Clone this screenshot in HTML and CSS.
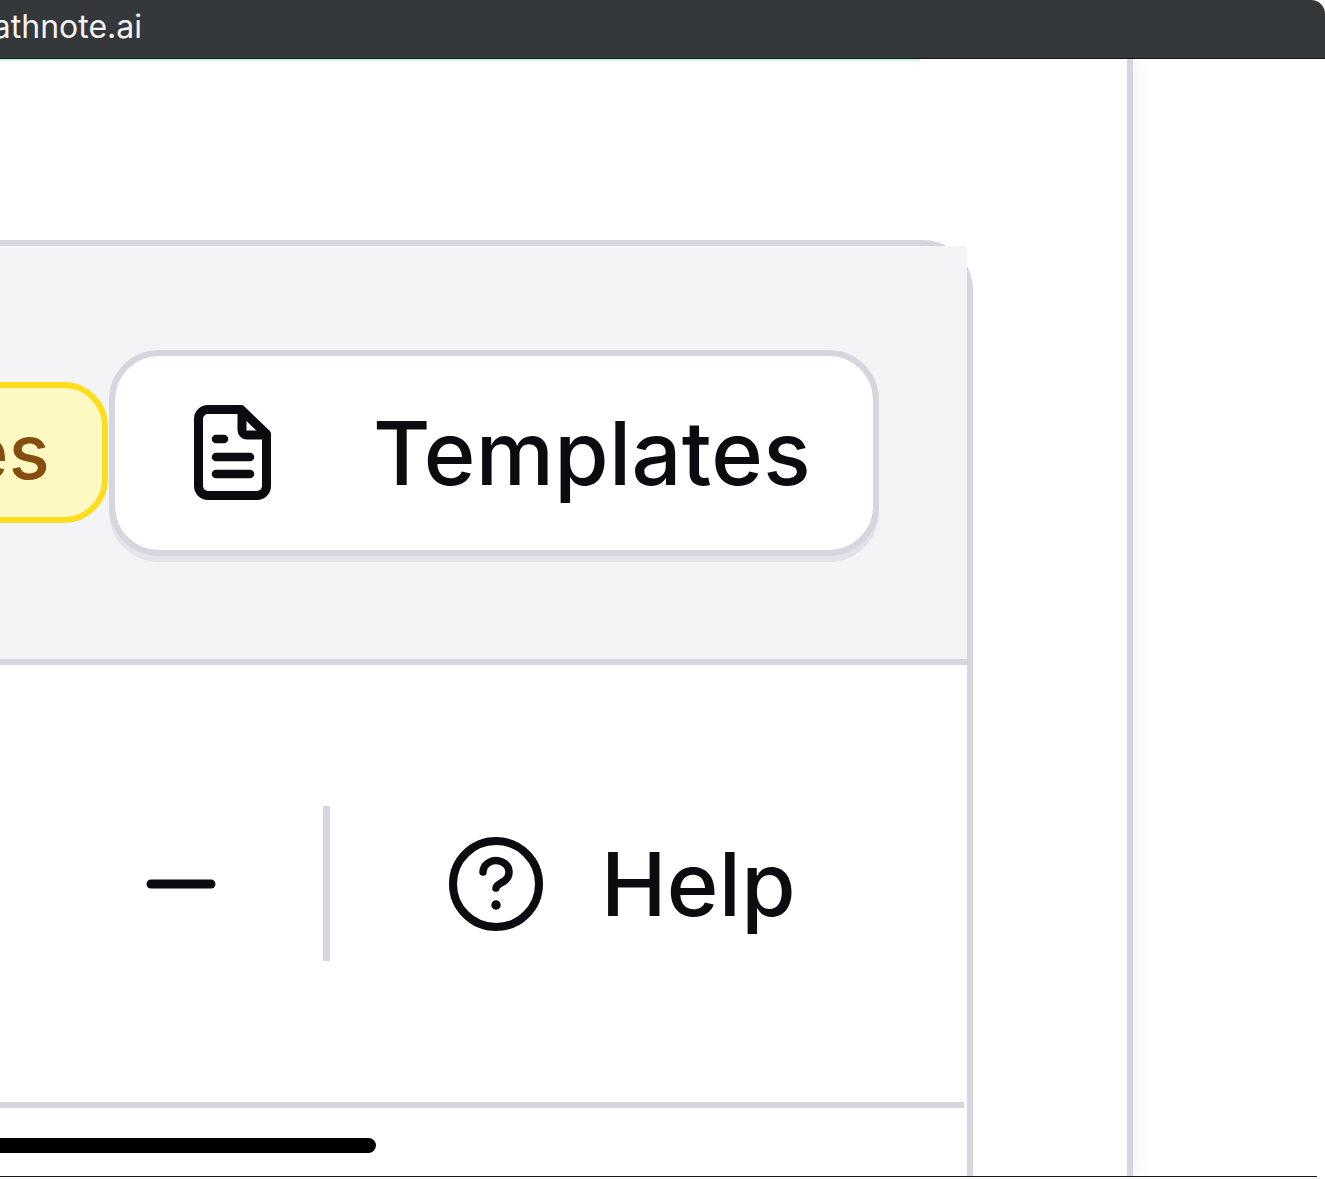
FILE: index.html
```html
<!DOCTYPE html>
<html lang="en">
  <head>
    <meta charset="UTF-8" />
    <meta name="viewport" content="width=device-width, initial-scale=1.0" />
    <title>Templates</title>
    <link rel="stylesheet" href="styles.css">
  </head>
  <body>
    <header class="url-bar">
      <div class="url-text"><span>mathnote.ai</span></div>
    </header>
    <div class="progress"></div>

    <main class="viewport">
      <div class="column">
        <section class="card">
          <div class="card-head">
            <button class="pill">es</button>
            <button class="btn-templates">
              <svg class="icon-doc" width="78" height="95" viewBox="0 0 78 95" fill="none" stroke="#0b0b10" stroke-width="9" stroke-linecap="round" stroke-linejoin="round">
                <path d="M14 4.500H47L72.500 29V81a9.500 9.500 0 0 1-9.500 9.500H14A9.500 9.500 0 0 1 4.500 81V14A9.500 9.500 0 0 1 14 4.500Z" />
                <path d="M48 6V25a5 5 0 0 0 5 5H71" />
                <path d="M22 34h8M22 52h34M22 69h34" stroke-width="8.500" />
              </svg>
              <span>Templates</span>
            </button>
          </div>

          <div class="tool-row">
            <svg class="icon-minus" width="70" height="10" viewBox="0 0 70 10">
              <path d="M5 5H65" stroke="#0b0b10" stroke-width="9" stroke-linecap="round" />
            </svg>
            <div class="divider"></div>
            <div class="help">
              <svg width="96" height="96" viewBox="0 0 96 96" fill="none" stroke="#0b0b10" stroke-width="8" stroke-linecap="round" stroke-linejoin="round">
                <circle cx="48" cy="48" r="43" />
                <path d="M35 36a13 11.500 0 1 1 20.500 9.500c-3.500 2.200-7 3.500-7.500 6.500" stroke-width="7.500" />
                <circle cx="48" cy="69" r="4.700" fill="#0b0b10" stroke="none" />
              </svg>
              <span>Help</span>
            </div>
          </div>

          <div class="black-bar"></div>
        </section>
      </div>
    </main>

    <div class="bottom-line"></div>
  </body>
</html>
```

FILE: styles.css
```css
* {
  box-sizing: border-box;
}
html,
body {
  margin: 0;
  height: 1179px;
  overflow: hidden;
  background: white;
}
body {
  display: flex;
  flex-direction: column;
  font-family: Inter, "Noto Sans", sans-serif;
  color: #0b0b10;
}
.url-bar {
  flex: none;
  height: 59px;
  background: #35383b;
  border-bottom: 1px solid #15171a;
  border-top-right-radius: 14px;
}
.url-text {
  width: 142px;
  height: 52px;
  display: flex;
  justify-content: flex-end;
  align-items: center;
  font-size: 32px;
  color: #f2f3f3;
  white-space: nowrap;
}
.progress {
  flex: none;
  width: 920px;
  height: 2px;
  margin-bottom: -2px;
  background: #c9f8de;
}
.viewport {
  flex: 1;
  display: flex;
  min-height: 0;
}
.column {
  width: 1133px;
  border-right: 6px solid #d6d6de;
  box-shadow: 6px 0 10px rgba(214, 214, 222, 0.25);
  clip-path: inset(0 -20px 0 0);
  padding-top: 181px;
  overflow: hidden;
}
.card {
  width: 973px;
  height: 1000px;
  background: white;
  border: 6px solid #d6d6de;
  border-left: none;
  border-bottom: none;
  border-top-right-radius: 50px;
}
.card-head {
  height: 419px;
  display: flex;
  align-items: center;
  justify-content: flex-end;
  padding-right: 88px;
  background: #f4f4f7;
  border-bottom: 6px solid #d6d6de;
  font-size: 88px;
  letter-spacing: 0.3px;
  font-weight: 450;
}
.card-head button {
  font-family: inherit;
  font-size: inherit;
  font-weight: inherit;
  letter-spacing: inherit;
  flex: none;
}
.card-head .pill {
  width: 200px;
  height: 141px;
  margin-right: 1px;
  padding: 0 52px 4px 0;
  text-align: right;
  font-size: 76px;
  font-weight: 500;
  color: #854d0e;
  background: #fef9c3;
  border: 6px solid #fedc1e;
  border-radius: 44px;
}
.btn-templates {
  display: flex;
  align-items: center;
  gap: 101px;
  width: 770px;
  height: 206px;
  padding: 0 0 0 79px;
  color: #0b0b10;
  background: white;
  border: 6px solid #d6d6de;
  border-radius: 50px;
  box-shadow: 0 6px 0 #e3e3e8;
}
.tool-row {
  height: 443px;
  margin-right: 3px;
  display: flex;
  align-items: center;
  justify-content: flex-end;
  padding-right: 168px;
  border-bottom: 6px solid #d6d6de;
}
.icon-minus {
  flex: none;
}
.divider {
  width: 7px;
  height: 155px;
  margin: 0 118px 0 107px;
  background: #d6d6de;
}
.help {
  display: flex;
  align-items: center;
  gap: 57px;
  font-size: 88px;
  letter-spacing: 0.3px;
  font-weight: 450;
}
.black-bar {
  width: 376px;
  height: 15px;
  margin-top: 30px;
  background: black;
  border-radius: 0 8px 8px 0;
}
.bottom-line {
  flex: none;
  width: 1317px;
  height: 3px;
  border-top: 1px solid #1a1a1a;
}
```
